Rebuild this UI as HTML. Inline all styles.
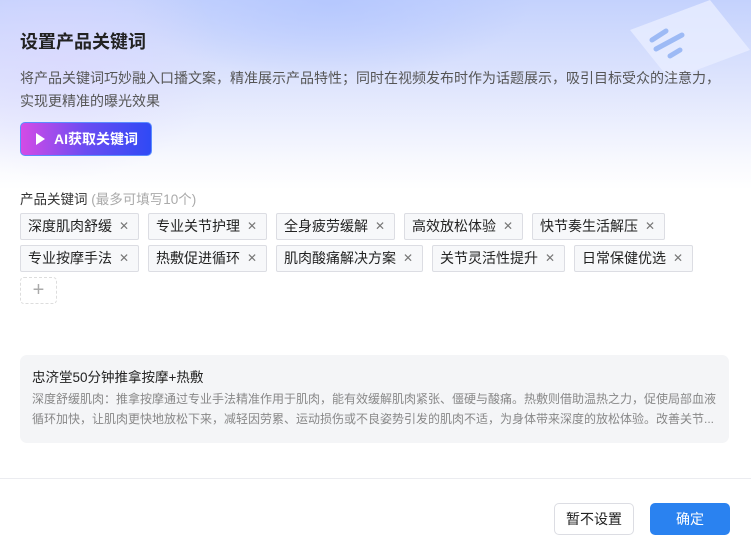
<!DOCTYPE html>
<html><head><meta charset="utf-8"><style>
*{margin:0;padding:0;box-sizing:border-box}
body{width:751px;height:550px;overflow:hidden;background:#fff;font-family:"Liberation Sans","Noto Sans CJK SC",sans-serif;position:relative}
.bg{position:absolute;left:0;top:0;width:751px;height:190px;background:linear-gradient(180deg,#c4d2fd 0%,#dfe5fd 45%,#f8f9fe 85%,#fff 100%)}
.bg2{position:absolute;left:0;top:0;width:751px;height:190px;background:radial-gradient(ellipse 160px 120px at 60px 60px,rgba(220,215,255,.6),transparent),radial-gradient(ellipse 200px 80px at 330px 0,rgba(175,195,255,.7),transparent)}
.t{position:absolute;left:20px;top:28px;font-size:18px;font-weight:bold;color:#222}
.d{position:absolute;left:20px;top:67px;width:730px;font-size:14px;line-height:23px;color:#555;white-space:nowrap}
.ai{position:absolute;left:20px;top:122px;width:132px;height:34px;border-radius:5px;background:linear-gradient(90deg,#d44be6,#6a4cf2 50%,#2f4af5);color:#fff;font-size:14px;font-weight:bold;line-height:32px;padding-left:33px;border:1px solid #5a8cff}
.ai:before{content:"";position:absolute;left:15px;top:10px;border-left:9px solid #fff;border-top:6px solid transparent;border-bottom:6px solid transparent}
.lb{position:absolute;left:20px;top:188px;font-size:13.5px;color:#333}
.lb span{color:#aaa}
.tag{position:absolute;height:27px;border:1px solid #dcdde3;background:#f7f8fa;border-radius:2px;font-size:14px;color:#222;line-height:25px;padding-left:7px}
.tag i{font-style:normal;position:absolute;right:9px;top:0;color:#777;font-size:12px}
.add{position:absolute;left:20px;top:277px;width:37px;height:27px;border:1px dashed #ddd;border-radius:4px;color:#aaa;text-align:center;line-height:24px;font-size:20px;font-weight:200}
.card{position:absolute;left:20px;top:355px;width:709px;height:88px;background:#f4f5f7;border-radius:7px;padding:14px 12px}
.card b{display:block;font-weight:normal;font-size:13.5px;color:#222;line-height:18px}
.card p{font-size:12px;color:#888;line-height:20px;margin-top:2px}
.ln{position:absolute;left:0;top:478px;width:751px;height:1px;background:#ebecf0}
.b1{position:absolute;left:554px;top:503px;width:80px;height:32px;border:1px solid #dcdde3;border-radius:5px;text-align:center;line-height:30px;font-size:14px;color:#222}
.b2{position:absolute;left:650px;top:503px;width:80px;height:32px;background:#2a82f0;border-radius:5px;text-align:center;line-height:32px;font-size:14px;color:#fff}
</style></head><body>
<div class="bg"></div><div class="bg2"></div>
<svg style="position:absolute;left:600px;top:0" width="151" height="90"><polygon points="30,30 110,0 150,50 70,80" fill="#e8eeff" opacity=".8"/><g stroke="#9dbaf5" stroke-width="5" stroke-linecap="round"><line x1="52" y1="40" x2="66" y2="31"/><line x1="56" y1="49" x2="82" y2="35"/><line x1="70" y1="56" x2="80" y2="50"/></g></svg>
<div class="t">设置产品关键词</div>
<div class="d">将产品关键词巧妙融入口播文案，精准展示产品特性；同时在视频发布时作为话题展示，吸引目标受众的注意力，<br>实现更精准的曝光效果</div>
<div class="ai">AI获取关键词</div>
<div class="lb">产品关键词 <span>(最多可填写10个)</span></div>
<div class="tag" style="left:20px;top:213px;width:119px">深度肌肉舒缓<i>✕</i></div>
<div class="tag" style="left:148px;top:213px;width:119px">专业关节护理<i>✕</i></div>
<div class="tag" style="left:276px;top:213px;width:119px">全身疲劳缓解<i>✕</i></div>
<div class="tag" style="left:404px;top:213px;width:119px">高效放松体验<i>✕</i></div>
<div class="tag" style="left:532px;top:213px;width:133px">快节奏生活解压<i>✕</i></div>
<div class="tag" style="left:20px;top:245px;width:119px">专业按摩手法<i>✕</i></div>
<div class="tag" style="left:148px;top:245px;width:119px">热敷促进循环<i>✕</i></div>
<div class="tag" style="left:276px;top:245px;width:147px">肌肉酸痛解决方案<i>✕</i></div>
<div class="tag" style="left:432px;top:245px;width:133px">关节灵活性提升<i>✕</i></div>
<div class="tag" style="left:574px;top:245px;width:119px">日常保健优选<i>✕</i></div>
<div class="add">+</div>
<div class="card"><b>忠济堂50分钟推拿按摩+热敷</b><p>深度舒缓肌肉：推拿按摩通过专业手法精准作用于肌肉，能有效缓解肌肉紧张、僵硬与酸痛。热敷则借助温热之力，促使局部血液循环加快，让肌肉更快地放松下来，减轻因劳累、运动损伤或不良姿势引发的肌肉不适，为身体带来深度的放松体验。改善关节...</p></div>
<div class="ln"></div>
<div class="b1">暂不设置</div>
<div class="b2">确定</div>
</body></html>
